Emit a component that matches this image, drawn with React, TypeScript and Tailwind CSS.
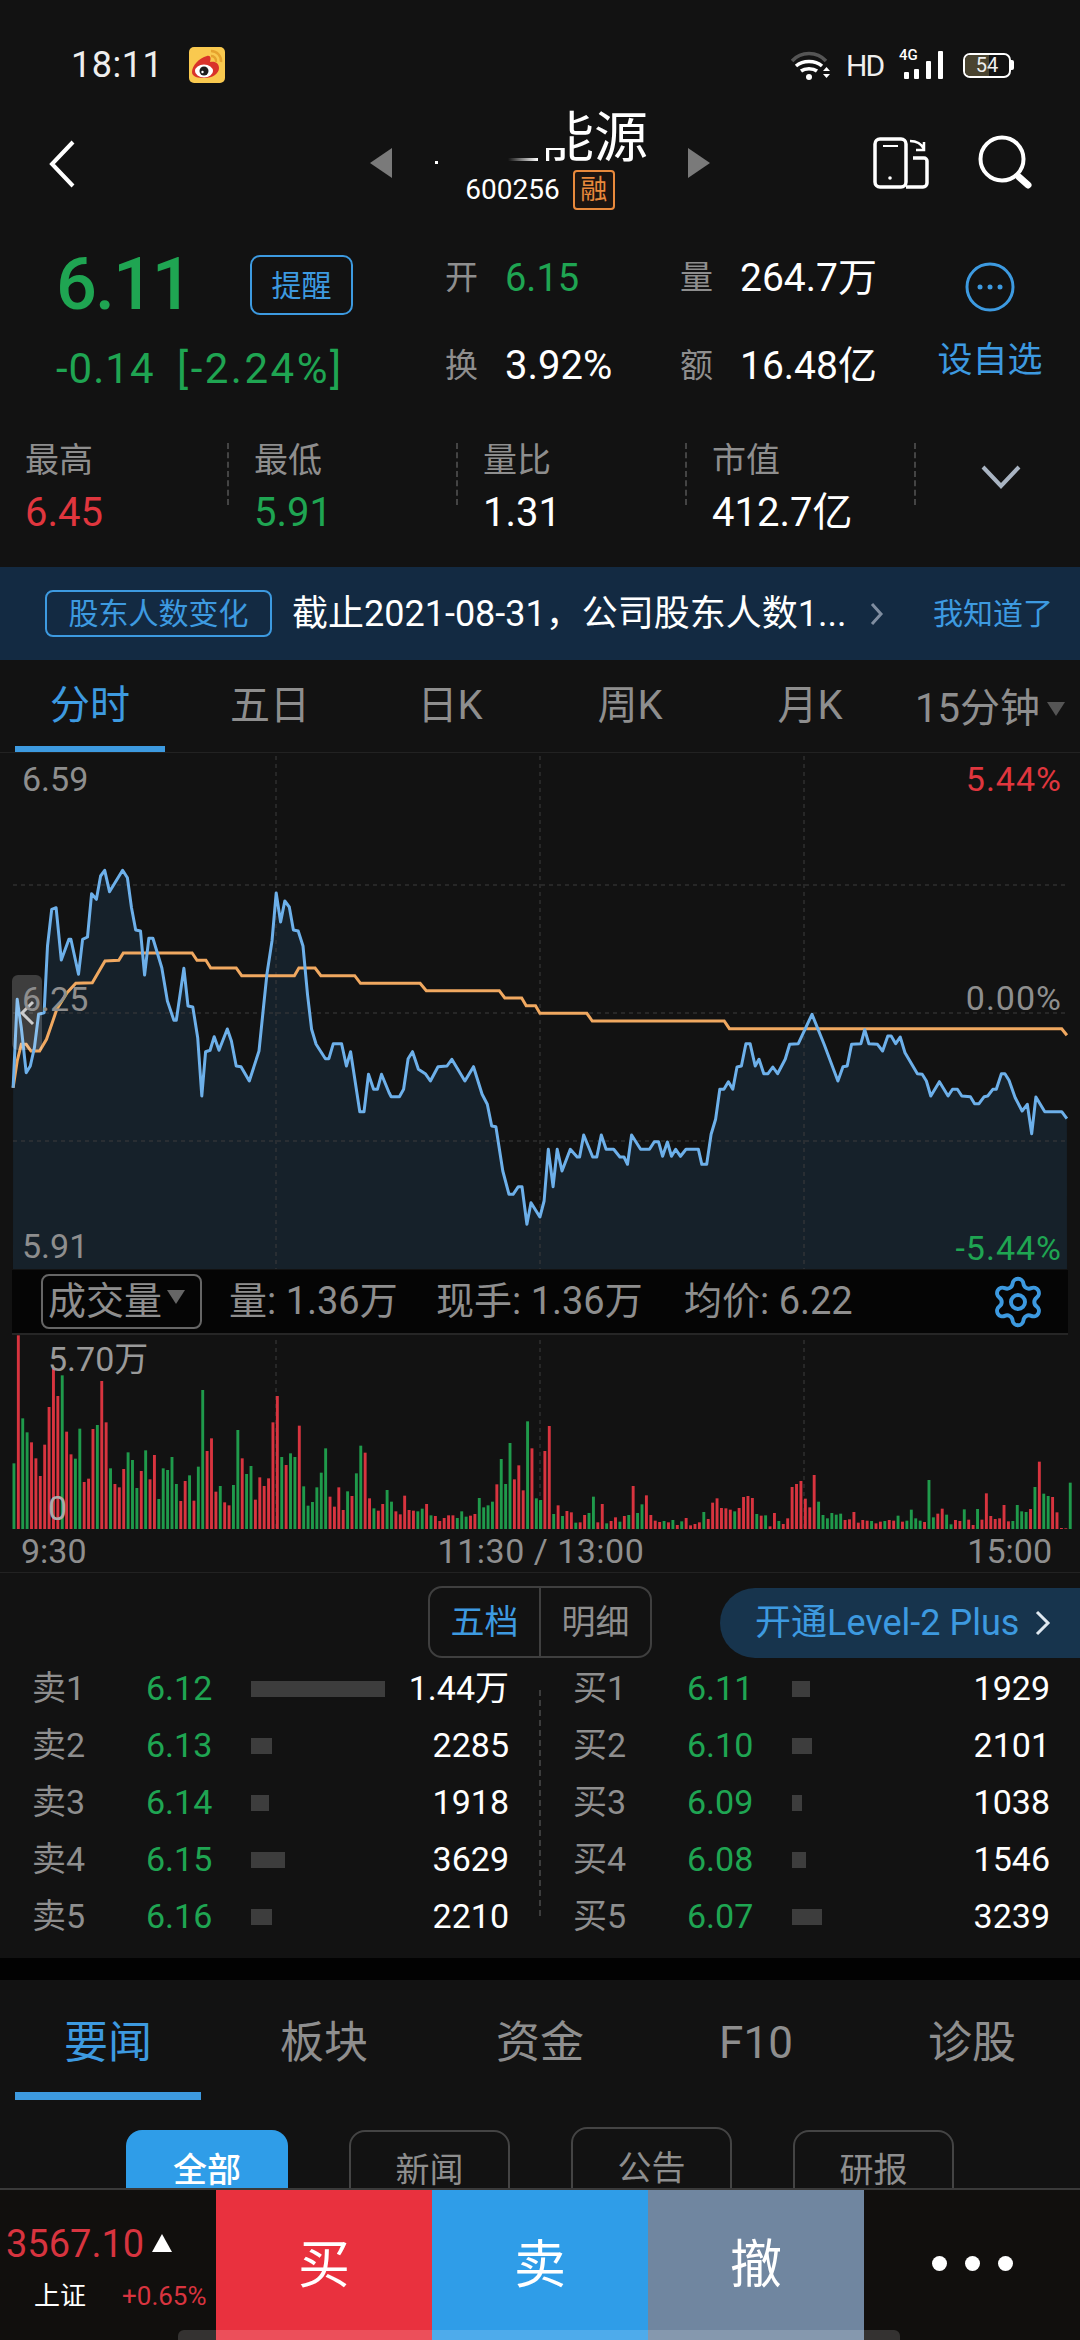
import React from "react";
import { Settings } from "lucide-react";

// price line, read off the chart (left half / right half)
const priceL =
  "38,980 50,715 62,800 76,935 88,915 100,860 112,760 128,755 138,555 150,445 163,440 178,597 200,535 206,535 228,640 240,535 254,528 266,398 280,415 292,345 304,328 318,392 356,328 370,350 382,440 394,507 408,510 420,642 432,532 444,532 470,620 486,720 505,778 512,778 534,622 546,735 560,738 574,830 586,1005 597,872 610,868 622,827 636,868 660,804 672,840 686,915 700,917 724,960 752,870 764,750 775,640 790,540 802,396 815,483 827,420 840,438 852,507 866,510 880,555 893,700 905,805 918,850 945,893 955,893 968,848 992,848 1006,915 1018,872 1045,1052 1057,1052 1070,940 1085,985 1096,985 1108,940 1130,995 1136,1007 1160,1007 1172,985 1185,893 1198,872 1215,925 1235,938 1250,960 1272,917 1298,915 1312,895 1350,960 1375,917 1400,1000 1415,1030 1428,1095 1440,1097 1460,1230 1478,1300 1490,1300 1505,1277 1516,1277 1530,1390 1542,1325 1568,1368";
const priceR =
  "12,1320 24,1165 38,1277 50,1165 64,1230 88,1165 108,1188 115,1188 127,1122 153,1188 165,1188 178,1122 192,1165 214,1165 232,1188 244,1188 254,1210 266,1122 292,1165 318,1165 332,1142 344,1142 356,1186 370,1143 382,1186 394,1165 408,1186 424,1165 460,1165 470,1210 484,1210 497,1120 510,1075 522,985 534,985 547,962 560,985 572,918 585,915 598,848 610,848 625,915 636,895 650,938 662,938 676,918 690,938 712,895 725,850 750,848 790,760 825,850 865,960 880,917 892,915 905,850 932,848 943,806 955,848 980,850 995,870 1010,825 1020,825 1033,848 1046,828 1060,875 1096,938 1110,940 1122,960 1135,1005 1160,962 1185,1005 1198,985 1212,985 1225,1005 1250,1007 1262,1028 1275,1028 1290,1007 1300,1005 1315,985 1325,985 1340,938 1350,938 1362,958 1380,1010 1400,1050 1415,1030 1428,1118 1440,1008 1466,1052 1515,1052 1530,1073";
const avgL =
  "38,980 50,900 62,850 76,850 90,870 115,870 135,835 150,790 165,745 195,695 220,667 268,665 305,600 345,598 358,576 558,576 572,598 598,598 612,621 686,621 702,644 855,644 868,621 915,621 932,644 1030,644 1047,667 1220,667 1238,689 1450,689 1466,711 1515,711 1528,734 1555,734 1568,757";
const avgR = "136,757 152,780 535,780 550,803 1515,803 1530,823";

const toPts = (s: string, dx: number) =>
  s.split(" ").map((p) => {
    const [x, y] = p.split(",").map(Number);
    return `${(dx + x / 2.904).toFixed(1)},${(760 + y / 3).toFixed(1)}`;
  });

const pricePts = [...toPts(priceL, 0), ...toPts(priceR, 540)];
const avgPts = [...toPts(avgL, 0), ...toPts(avgR, 540)];

// volume bars: colour + top of the bar
const volL =
  "g580 r196 g445 g487 r517 r565 r618 r524 r411 r295 r378 g316 r485 r553 g566 g476 r636 r626 r477 g465 r333 r457 g595 r642 r652 r597 g547 g570 g654 r603 g541 r628 r555 g687 g595 g600 g561 g642 r693 r633 g616 r692 g590 g360 r543 r505 r665 g648 r697 r706 g645 g480 r565 g612 g588 r689 r622 r648 r625 r457 r378 g561 r585 g550 g561 r467 g649 g707 g696 g652 g608 g535 r680 r710 r652 r720 g664 r678 g610 g527 r548 r685 g715 r722 r702 g660 g695 r724 r733 r677 r720 r722 g724 g716 r702 g736 r738 r753 r744 r736 r736 g744 g724 g740 r737 r732 g684 g712 g706 g695 r643 g567 g642 g519 r628 r586 r661 g454 r535 g685 g690";
const volR =
  "g692 r543 r468 g732 r706 g738 r723 r727 g758 r757 r735 g729 g680 r757 r702 g760 r753 r742 g755 r738 g735 r648 g729 g703 r676 r735 r752 r756 g753 r757 g750 r765 g754 r744 r766 r762 r757 g726 r747 r698 r685 r714 r715 r719 g724 r714 r681 r678 r684 g732 r737 g736 r769 r729 g753 r762 r745 r651 r642 r633 r686 r712 r615 g695 g735 g745 g729 g734 g731 r750 r748 r726 r758 r750 r752 g753 r760 r755 g753 r750 r752 g737 r755 g752 g719 g745 g752 r756 g630 g742 r731 r716 g734 g763 r750 r753 g718 r749 r765 g717 r749 r670 r738 r747 r745 r705 r754 g753 g705 g724 g726 r717 g651 r575 g671 g678 r681 r727 r774 r775 g638";

const bars = [
  ...volL.split(" ").map((b, i) => ({ c: b[0], top: +b.slice(1), x: 12.5 + i * 4.39 })),
  ...volR.split(" ").map((b, i) => ({ c: b[0], top: +b.slice(1), x: 539 + i * 4.415 })),
];

const asks = [
  ["卖1", "6.12", 134, "1.44万"],
  ["卖2", "6.13", 21, "2285"],
  ["卖3", "6.14", 18, "1918"],
  ["卖4", "6.15", 34, "3629"],
  ["卖5", "6.16", 21, "2210"],
] as const;
const bids = [
  ["买1", "6.11", 18, "1929"],
  ["买2", "6.10", 20, "2101"],
  ["买3", "6.09", 10, "1038"],
  ["买4", "6.08", 14, "1546"],
  ["买5", "6.07", 30, "3239"],
] as const;

const stats = [
  ["最高", "6.45", "text-[#e0363e]"],
  ["最低", "5.91", "text-[#1fa552]"],
  ["量比", "1.31", "text-white"],
  ["市值", "412.7亿", "text-white"],
];

const BookSide = ({ rows }: { rows: readonly (readonly [string, string, number, string])[] }) => (
  <div className="w-[477px]">
    {rows.map((r) => (
      <div key={r[0]} className="flex h-[57px] items-center">
        <span className="w-[114px] text-[34px] text-[#8e8e8e]">{r[0]}</span>
        <span className="w-[105px] text-[34px] text-[#1fa552]">{r[1]}</span>
        <div className="h-[16px] bg-[#3d3d3d]" style={{ width: r[2] }} />
        <span className="ml-auto text-[34px] text-white">{r[3]}</span>
      </div>
    ))}
  </div>
);

const App = () => {
  return (
    <div className="flex h-[2340px] w-[1080px] flex-col overflow-hidden bg-[#121212] font-[Roboto,'Noto_Sans_CJK_SC',sans-serif] text-white">
      <div className="flex-1 overflow-hidden">
        {/* status bar */}
        <div className="flex h-[130px] items-center pl-[71px] pr-[66px]">
          <span className="w-[118px] text-[36px] tracking-[0.5px] text-[#eeeeee]">18:11</span>
          <svg width="36" height="36" viewBox="0 0 36 36">
            <rect width="36" height="36" rx="5" fill="#f9c94f" />
            <path d="M3 25c0-6 7-14 15-16 4-1 4 3 3 6 6-1 9 2 9 6 0 6-7 10-14 10S3 30 3 25z" fill="#d9322a" />
            <ellipse cx="15" cy="24" rx="9" ry="6.5" fill="#fff" />
            <circle cx="15" cy="24" r="4.5" fill="#1d1d1d" />
            <circle cx="13.5" cy="25" r="1.2" fill="#fff" />
            <path d="M22 4a10 10 0 0 1 10 11M22 9a5 5 0 0 1 5 6" fill="none" stroke="#e6a32e" strokeWidth="2.5" />
          </svg>
          <svg className="ml-auto" width="40" height="30" viewBox="0 0 40 30">
            <path d="M1 11c9-10 25-10 34 0" fill="none" stroke="#555" strokeWidth="3.5" />
            <path d="M5 16c7-6 19-6 26 0M10 21c4-3 12-3 16 0" fill="none" stroke="#fff" strokeWidth="3.5" />
            <circle cx="18" cy="27" r="3" fill="#fff" />
            <path d="M32 21l3.500-4 3.500 4zM32 24l3.500 4 3.500-4z" fill="#fff" />
          </svg>
          <span className="ml-[15px] w-[35px] text-[30px] tracking-[-2px] text-[#eeeeee]">HD</span>
          <div className="relative ml-[18px] h-[28px] w-[44px]">
            <span className="absolute left-0 top-[-5px] text-[15px] font-medium leading-[18px] text-white">4G</span>
            <svg className="absolute inset-0" width="44" height="28" viewBox="0 0 44 28">
              <rect x="5" y="21" width="5" height="7" rx="1" fill="#fff" />
              <rect x="15" y="18" width="5" height="10" rx="1" fill="#fff" />
              <rect x="27" y="10" width="5" height="18" rx="1" fill="#fff" />
              <rect x="39" y="0" width="5" height="28" rx="1" fill="#fff" />
            </svg>
          </div>
          <div className="ml-[20px] flex items-center">
            <div className="relative flex h-[25px] w-[48px] items-center justify-center overflow-hidden rounded-[7px] border-2 border-white text-[20px] leading-none text-[#eeeeee]">
              <div className="absolute inset-y-0 left-0 w-[54%] bg-[#4a4430]" />
              <span className="relative">54</span>
            </div>
            <div className="h-[10px] w-[3px] rounded-r-[2px] bg-white" />
          </div>
        </div>

        {/* stock header */}
        <div className="flex h-[102px] items-start">
          <svg className="ml-[48px] mt-[10px]" width="28" height="48" viewBox="0 0 28 48">
            <path d="M25 2 4 24l21 22" fill="none" stroke="#fff" strokeWidth="4" />
          </svg>
          <svg className="ml-[294px] mt-[18px]" width="22" height="30" viewBox="0 0 22 30">
            <path d="M22 0v30L0 15z" fill="#7a7a7a" />
          </svg>
          <div className="relative w-[296px]">
            <div className="mt-[-21px] pr-[40px] text-right text-[54px] leading-[60px]">能源</div>
            {/* the name is partly wiped out in the picture */}
            <div className="absolute left-[144px] top-[-22px] h-[40px] w-[33px] bg-[#121212]" />
            <div className="absolute left-[144px] top-[15px] h-[22px] w-[10px] bg-[#121212]" />
            <div className="absolute left-[116px] top-[28px] h-[3px] w-[30px] bg-linear-to-r from-transparent to-white" />
            <div className="absolute left-[43px] top-[31px] h-[3px] w-[3px] bg-white" />
            <div className="mt-[1px] flex items-center justify-center">
              <span className="text-[28px] leading-[40px]">600256</span>
              <span className="ml-[13px] flex h-[40px] w-[42px] items-center justify-center rounded-[4px] border-2 border-[#e98a3c] bg-[#1d1510] text-[27px] text-[#e98a3c]">
                融
              </span>
            </div>
          </div>
          <svg className="mt-[18px]" width="22" height="30" viewBox="0 0 22 30">
            <path d="M0 0v30l22-15z" fill="#7a7a7a" />
          </svg>
          <svg className="ml-[163px] mt-[7px]" width="56" height="52" viewBox="0 0 56 52">
            <rect x="2" y="2" width="31" height="48" rx="5" fill="none" stroke="#fff" strokeWidth="3.500" />
            <path d="M33 50h17a4 4 0 0 0 4-4V24a3 3 0 0 0-3-3H40" fill="none" stroke="#fff" strokeWidth="3.500" />
            <path d="M37 4c6 0 11 2 14 8M43 13h8V5" fill="none" stroke="#fff" strokeWidth="2.500" />
            <path d="M10 9h15" stroke="#fff" strokeWidth="2" />
            <circle cx="17" cy="41" r="1.800" fill="#fff" />
          </svg>
          <svg className="ml-[48px] mt-[4px]" width="58" height="56" viewBox="0 0 58 56">
            <circle cx="25" cy="25" r="21.500" fill="none" stroke="#fff" strokeWidth="4" />
            <path d="M42 43l9 8" stroke="#fff" strokeWidth="7" strokeLinecap="round" />
          </svg>
        </div>

        {/* quote */}
        <div className="flex h-[188px]">
          <div className="w-[445px] pl-[56px]">
            <div className="flex h-[106px] items-center">
              <span className="w-[194px] text-[72px] font-medium tracking-[-2px] text-[#1fa552]">6.11</span>
              <span className="flex h-[60px] w-[103px] items-center justify-center rounded-[10px] border-[2.5px] border-[#3d9ae0] text-[30px] text-[#3d9ae0]">
                提醒
              </span>
            </div>
            <div className="flex h-[60px] items-center text-[42px] text-[#1fa552]">
              <span className="w-[121px] tracking-[1px]">-0.14</span>
              <span className="tracking-[2.5px]">[-2.24%]</span>
            </div>
          </div>
          <div className="w-[235px] pt-[24px]">
            <div className="flex h-[44px] items-center">
              <span className="w-[60px] text-[33px] text-[#8e8e8e]">开</span>
              <span className="text-[38px] text-[#1fa552]">6.15</span>
            </div>
            <div className="mt-[44px] flex h-[44px] items-center">
              <span className="w-[60px] text-[33px] text-[#8e8e8e]">换</span>
              <span className="text-[40px] text-white">3.92%</span>
            </div>
          </div>
          <div className="w-[257px] pt-[24px]">
            <div className="flex h-[44px] items-center">
              <span className="w-[60px] text-[33px] text-[#8e8e8e]">量</span>
              <span className="text-[39px] text-white">264.7万</span>
            </div>
            <div className="mt-[44px] flex h-[44px] items-center">
              <span className="w-[60px] text-[33px] text-[#8e8e8e]">额</span>
              <span className="text-[39px] text-white">16.48亿</span>
            </div>
          </div>
          <div className="flex w-[106px] flex-col items-center pt-[30px]">
            <svg width="50" height="50" viewBox="0 0 50 50">
              <circle cx="25" cy="25" r="23" fill="none" stroke="#3d9ae0" strokeWidth="3" />
              <circle cx="15" cy="25" r="2.500" fill="#3d9ae0" />
              <circle cx="25" cy="25" r="2.500" fill="#3d9ae0" />
              <circle cx="35" cy="25" r="2.500" fill="#3d9ae0" />
            </svg>
            <span className="mt-[28px] whitespace-nowrap text-[35px] leading-[42px] text-[#3d9ae0]">设自选</span>
          </div>
        </div>

        {/* high / low row */}
        <div className="flex h-[147px] items-start">
          {stats.map((s) => (
            <div key={s[0]} className="mt-[23px] h-[62px] w-[229px] border-r-2 border-dashed border-[#444] pl-[25px]">
              <div className="text-[34px] leading-[34px] text-[#8e8e8e]">{s[0]}</div>
              <div className={`mt-[14px] text-[40px] leading-[44px] ${s[2]}`}>{s[1]}</div>
            </div>
          ))}
          <svg className="ml-[65px] mt-[45px]" width="40" height="24" viewBox="0 0 40 24">
            <path d="M2 2l18 19L38 2" fill="none" stroke="#a9b4c2" strokeWidth="4" />
          </svg>
        </div>

        {/* notice banner */}
        <div className="flex h-[93px] items-center bg-[#132a42] pl-[45px]">
          <span className="flex h-[47px] w-[227px] items-center justify-center rounded-[8px] border-2 border-[#3d9ae0] text-[30px] text-[#3d9ae0]">
            股东人数变化
          </span>
          <span className="ml-[20px] w-[578px] whitespace-nowrap text-[36px] text-white">截止2021-08-31，公司股东人数1...</span>
          <svg width="14" height="24" viewBox="0 0 14 24">
            <path d="M2 2l9 10-9 10" fill="none" stroke="#7f8da0" strokeWidth="3" />
          </svg>
          <span className="ml-[49px] text-[30px] text-[#3d9ae0]">我知道了</span>
        </div>

        {/* period tabs */}
        <div className="relative flex h-[92px] items-start text-[40px] text-[#8e8e8e]">
          <div className="w-[180px] pt-[16px] text-center text-[#3d9ae0]">分时</div>
          <div className="w-[180px] pt-[16px] text-center">五日</div>
          <div className="w-[180px] pt-[16px] text-center">日K</div>
          <div className="w-[180px] pt-[16px] text-center">周K</div>
          <div className="w-[180px] pt-[16px] text-center">月K</div>
          <div className="ml-[15px] flex items-center pt-[19px]">
            <span className="whitespace-nowrap">15分钟</span>
            <svg className="ml-[7px]" width="18" height="14" viewBox="0 0 18 14">
              <path d="M0 0h18L9 14z" fill="#555" />
            </svg>
          </div>
          <div className="absolute bottom-0 left-[15px] h-[6px] w-[150px] bg-[#3d9ae0]" />
        </div>

        {/* intraday chart */}
        <div className="relative h-[518px] border-t border-[#222]">
          <svg className="absolute inset-0" width="1080" height="518" viewBox="0 752 1080 518">
            <polygon points={`13,1268 ${pricePts.join(" ")} 1067,1268`} fill="#16212a" />
            {[884, 1012, 1140].map((y) => (
              <line key={y} x1="13" x2="1066" y1={y} y2={y} stroke="#3c3c3c" strokeDasharray="4 4" />
            ))}
            {[276, 540, 804].map((x) => (
              <line key={x} x1={x} x2={x} y1="755" y2="1268" stroke="#3c3c3c" strokeDasharray="4 4" />
            ))}
            <polyline points={avgPts.join(" ")} fill="none" stroke="#f0a860" strokeWidth="3" />
            <polyline points={pricePts.join(" ")} fill="none" stroke="#6db0ea" strokeWidth="3" strokeLinejoin="round" />
          </svg>
          <span className="absolute left-[22px] top-[6px] text-[34px] leading-[40px] text-[#8e8e8e]">6.59</span>
          <span className="absolute right-[18px] top-[6px] text-[34px] leading-[40px] tracking-[1px] text-[#e0363e]">5.44%</span>
          <div className="absolute left-[12px] top-[222px] flex h-[75px] w-[30px] items-center justify-center rounded-l-[6px] rounded-tr-[6px] bg-[#ffffff30]">
            <svg width="16" height="26" viewBox="0 0 16 26">
              <path d="M14 2 3 13l11 11" fill="none" stroke="#ccc" strokeWidth="3" />
            </svg>
          </div>
          <span className="absolute left-[22px] top-[226px] text-[34px] leading-[40px] text-[#8e8e8e]">6.25</span>
          <span className="absolute right-[18px] top-[225px] text-[34px] leading-[40px] tracking-[1px] text-[#8e8e8e]">0.00%</span>
          <span className="absolute bottom-[4px] left-[22px] text-[34px] leading-[40px] text-[#8e8e8e]">5.91</span>
          <span className="absolute bottom-[2px] right-[18px] text-[34px] leading-[40px] tracking-[1px] text-[#1fa552]">-5.44%</span>
        </div>

        {/* volume header */}
        <div className="mx-[12px] flex h-[65px] items-center border-b-2 border-[#262626] bg-[#050505] pl-[29px] text-[38px] text-[#8e8e8e]">
          <div className="flex h-[55px] w-[161px] items-center rounded-[8px] border-2 border-[#666] pl-[5px]">
            <span className="whitespace-nowrap">成交量</span>
            <svg className="ml-[5px] mt-[-10px]" width="18" height="14" viewBox="0 0 18 14">
              <path d="M0 0h18L9 14z" fill="#666" />
            </svg>
          </div>
          <span className="ml-[27px] w-[207px] whitespace-nowrap">量: 1.36万</span>
          <span className="w-[248px] whitespace-nowrap">现手: 1.36万</span>
          <span className="w-[306px] whitespace-nowrap">均价: 6.22</span>
          <Settings className="text-[#3d9ae0]" size={56} strokeWidth={1.7} />
        </div>

        {/* volume bars */}
        <div className="relative h-[195px]">
          <svg className="absolute inset-0" width="1080" height="195" viewBox="0 1335 1080 195">
            {[276, 540, 804].map((x) => (
              <line key={x} x1={x} x2={x} y1="1340" y2="1530" stroke="#3c3c3c" strokeDasharray="4 4" />
            ))}
            {bars.map((b, i) => {
              const y = 1270 + b.top / 3;
              return <rect key={i} x={b.x} y={y} width="2.9" height={1529 - y} fill={b.c === "r" ? "#d8343f" : "#1f9a4b"} />;
            })}
          </svg>
          <span className="absolute left-[48px] top-[5px] text-[34px] leading-[38px] text-[#9a9a9a]">5.70万</span>
          <span className="absolute left-[48px] top-[154px] text-[34px] leading-[38px] text-[#aaaaaa]">0</span>
        </div>

        {/* time axis */}
        <div className="flex h-[42px] items-center justify-between pl-[21px] pr-[28px] text-[34px] text-[#8e8e8e]">
          <span>9:30</span>
          <span className="ml-[28px] tracking-[0.5px]">11:30 / 13:00</span>
          <span>15:00</span>
        </div>

        {/* order book */}
        <div className="border-t border-[#222]">
          <div className="flex h-[85px] items-end">
            <div className="ml-[428px] flex h-[72px] w-[224px] rounded-[14px] border-2 border-[#3f3f3f] text-[34px]">
              <span className="flex flex-1 items-center justify-center border-r-2 border-[#3f3f3f] text-[#3d9ae0]">五档</span>
              <span className="flex flex-1 items-center justify-center text-[#8e8e8e]">明细</span>
            </div>
            <div className="ml-[68px] flex h-[70px] flex-1 items-center rounded-l-[35px] bg-[#17344d] pl-[35px] text-[36px] text-[#3d9ae0]">
              <span className="whitespace-nowrap">开通Level-2 Plus</span>
              <svg className="ml-[16px]" width="16" height="26" viewBox="0 0 16 26">
                <path d="M2 2l11 11L2 24" fill="none" stroke="#dfe8f0" strokeWidth="3" />
              </svg>
            </div>
          </div>
          <div className="relative mt-[2px] flex pl-[32px]">
            <BookSide rows={asks} />
            <div className="absolute left-[539px] top-[30px] h-[226px] border-l-2 border-dashed border-[#3c3c3c]" />
            <div className="ml-[64px]">
              <BookSide rows={bids} />
            </div>
          </div>
        </div>

        <div className="mt-[13px] h-[22px] bg-[#020202]" />

        {/* bottom tabs */}
        <div className="flex h-[120px] pt-[30px] text-[44px] text-[#8e8e8e]">
          {["要闻", "板块", "资金", "F10", "诊股"].map((t, i) => (
            <div key={t} className="relative w-[216px] text-center">
              <span className={i === 0 ? "text-[#3d9ae0]" : ""}>{t}</span>
              {i === 0 && <div className="absolute left-[15px] top-[82px] h-[8px] w-[186px] bg-[#3d9ae0]" />}
            </div>
          ))}
        </div>
        <div className="ml-[126px] mt-[30px] flex gap-[61px] text-[34px]">
          <span className="flex h-[80px] w-[162px] items-center justify-center rounded-[16px] bg-[#2f9de8] font-medium text-white">全部</span>
          <span className="flex h-[80px] w-[161px] items-center justify-center rounded-[16px] border-2 border-[#444] text-[#8e8e8e]">新闻</span>
          <span className="mt-[-3px] flex h-[83px] w-[161px] items-center justify-center rounded-[16px] border-2 border-[#444] text-[#8e8e8e]">公告</span>
          <span className="flex h-[80px] w-[161px] items-center justify-center rounded-[16px] border-2 border-[#444] text-[#8e8e8e]">研报</span>
        </div>
      </div>

      {/* trade bar */}
      <div className="relative flex h-[152px] shrink-0 border-t-2 border-[#3a3a3a] bg-[#110f0d]">
        <div className="w-[216px] pl-[6px] pt-[31px]">
          <div className="flex items-start">
            <span className="text-[38px] leading-[46px] text-[#d8343f]">3567.10</span>
            <svg className="ml-[8px] mt-[13px]" width="20" height="18" viewBox="0 0 20 18">
              <path d="M10 0l10 18H0z" fill="#fff" />
            </svg>
          </div>
          <div className="mt-[12px] flex items-center">
            <span className="ml-[28px] text-[26px] leading-[34px] text-white">上证</span>
            <span className="ml-[36px] text-[26px] leading-[34px] text-[#d8343f]">+0.65%</span>
          </div>
        </div>
        <div className="flex w-[216px] items-center justify-center bg-[#e9313e] pt-[2px] text-[52px]">买</div>
        <div className="flex w-[216px] items-center justify-center bg-[#2f9de8] pt-[2px] text-[52px]">卖</div>
        <div className="flex w-[216px] items-center justify-center bg-[#7086a0] pt-[2px] text-[52px]">撤</div>
        <div className="flex w-[216px] items-center justify-center gap-[18px] pb-[4px]">
          <div className="h-[15px] w-[15px] rounded-full bg-white" />
          <div className="h-[15px] w-[15px] rounded-full bg-white" />
          <div className="h-[15px] w-[15px] rounded-full bg-white" />
        </div>
        <div className="absolute bottom-0 left-[178px] h-[10px] w-[722px] rounded-t-[6px] bg-[#ffffff26]" />
      </div>
    </div>
  );
};

export default App;
